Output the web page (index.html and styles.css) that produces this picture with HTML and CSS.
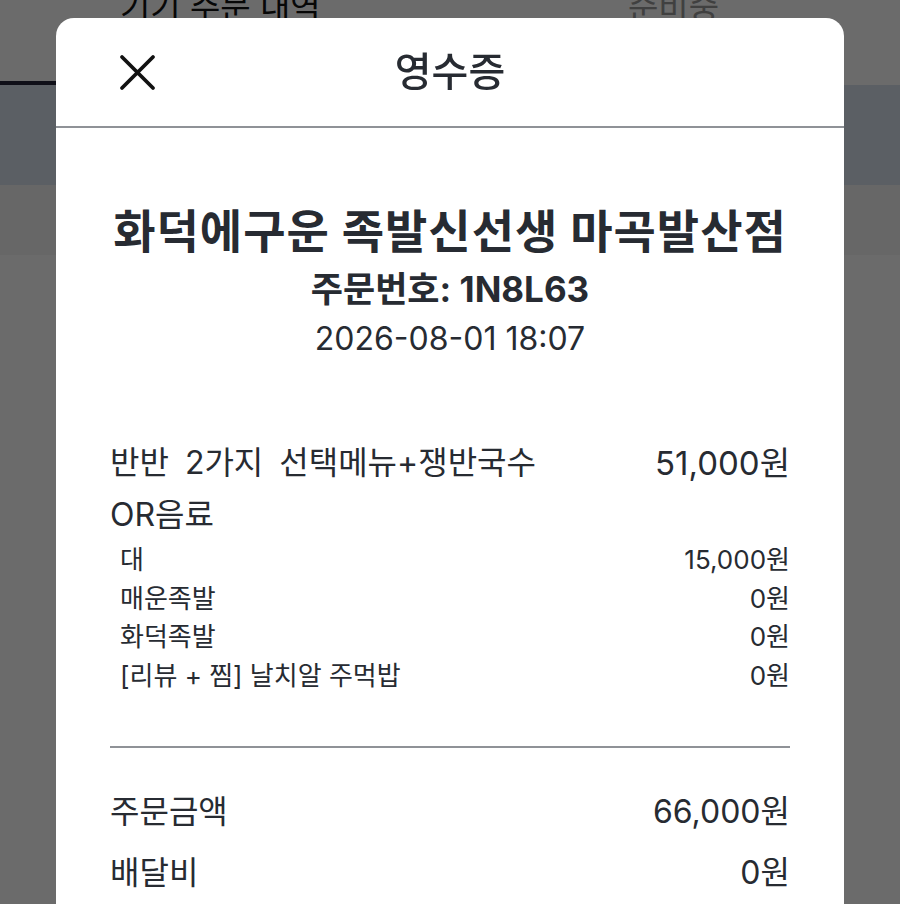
FILE: index.html
```html
<!DOCTYPE html>
<html lang="ko">
<head>
<meta charset="utf-8">
<title>영수증</title>
<link rel="stylesheet" href="styles.css">
</head>
<body>
<div class="page">
  <div class="tabs">
    <div class="tab tab-active">기기 주문 내역</div>
    <div class="tab tab-muted">준비중</div>
  </div>
  <div class="band-a"></div>
  <div class="band-b"></div>
</div>
<div class="overlay"></div>
<div class="modal">
  <div class="modal-head">
    <button class="close" aria-label="닫기">
      <svg width="40" height="40" viewBox="0 0 40 40"><path d="M5 5 L36 36 M36 5 L5 36" stroke="#111" stroke-width="3.8" stroke-linecap="round" fill="none"/></svg>
    </button>
    <div class="modal-title">영수증</div>
  </div>
  <div class="modal-body">
    <div class="store">화덕에구운 족발신선생 마곡발산점</div>
    <div class="order-no">주문번호: 1N8L63</div>
    <div class="order-date">2026-08-01 18:07</div>

    <div class="item">
      <div class="item-row">
        <div class="item-name">반반 2가지 선택메뉴+쟁반국수OR음료</div>
        <div class="item-price">51,000원</div>
      </div>
      <div class="opt"><span>대</span><span>15,000원</span></div>
      <div class="opt"><span>매운족발</span><span>0원</span></div>
      <div class="opt"><span>화덕족발</span><span>0원</span></div>
      <div class="opt"><span>[리뷰 + 찜] 날치알 주먹밥</span><span>0원</span></div>
    </div>

    <div class="divider"></div>

    <div class="totals">
      <div class="total-row"><span>주문금액</span><span>66,000원</span></div>
      <div class="total-row"><span>배달비</span><span>0원</span></div>
    </div>
  </div>
</div>
</body>
</html>
```
FILE: styles.css
```css
html, body {
  margin: 0;
  padding: 0;
  height: 100%;
  overflow: hidden;
  background: #ffffff;
  font-family: "Inter", "Noto Sans CJK KR", sans-serif;
  color: #272b32;
}

.page {
  width: 900px;
}

.tabs {
  display: flex;
  height: 98px;
  margin-top: -13px;
}

.tab {
  flex: none;
  width: 450px;
  box-sizing: border-box;
  font-size: 33px;
  line-height: 40px;
}

.tab-active {
  padding-left: 120px;
  color: #111111;
  border-bottom: 4px solid #24243a;
}

.tab-muted {
  padding-left: 178px;
  color: #9a9a9a;
}

.band-a {
  height: 100px;
  background: #d9e2ee;
}

.band-b {
  height: 70px;
  background: #f5f5f5;
}

.overlay {
  position: fixed;
  inset: 0;
  background: rgba(0, 0, 0, 0.58);
}

.modal {
  position: absolute;
  top: 18px;
  left: 56px;
  width: 788px;
  height: 1000px;
  background: #ffffff;
  border-radius: 18px 18px 0 0;
}

.modal-head {
  height: 108px;
  border-bottom: 2px solid #8f9297;
  display: flex;
  align-items: center;
  justify-content: center;
  position: relative;
}

.close {
  position: absolute;
  left: 61px;
  top: 34px;
  width: 40px;
  height: 40px;
  padding: 0;
  border: 0;
  background: none;
}

.close svg {
  display: block;
}

.modal-title {
  font-size: 40px;
  font-weight: 500;
  line-height: 50px;
  color: #272b32;
}

.modal-body {
  padding: 74px 54px 0;
}

.store {
  text-align: center;
  font-size: 46px;
  font-weight: 700;
  letter-spacing: 1px;
  line-height: 58px;
}

.order-no {
  text-align: center;
  font-size: 35px;
  font-weight: 700;
  line-height: 50px;
  margin-top: 4px;
}

.order-date {
  text-align: center;
  font-size: 32px;
  font-weight: 400;
  line-height: 50px;
}

.item {
  margin-top: 73px;
}

.item-row {
  display: flex;
  justify-content: space-between;
  align-items: flex-start;
  font-size: 32px;
  line-height: 52px;
}

.item-name {
  flex: 1;
  max-width: 460px;
  word-spacing: 7px;
}

.item-price {
  flex-shrink: 0;
  font-size: 33px;
}

.opt {
  display: flex;
  justify-content: space-between;
  font-size: 26px;
  line-height: 38.5px;
  padding-left: 10px;
}

.divider {
  height: 2px;
  background: #8f9297;
  margin-top: 51px;
}

.totals {
  margin-top: 38px;
  display: flex;
  flex-direction: column;
  gap: 9px;
}

.total-row {
  display: flex;
  justify-content: space-between;
  font-size: 32px;
  line-height: 52px;
}
```
